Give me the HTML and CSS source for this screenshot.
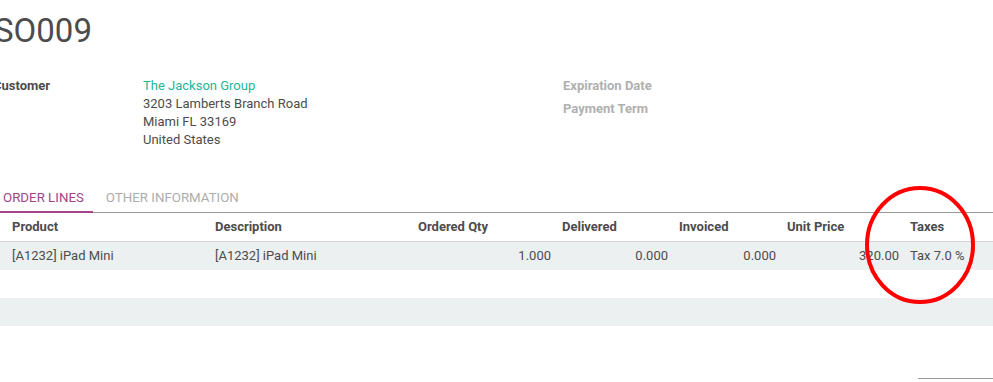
FILE: index.html
```html
<!DOCTYPE html>
<html>
<head>
	<title>SO009</title>
	<meta charset="UTF-8">
	<link rel="stylesheet" href="styles.css">
</head>
<body>
	<div class="sheet">
		<div class="sheet_head">
			<h1 class="title">SO009</h1>
			<div class="info">
				<div class="info_left">
					<span class="label">Customer</span>
					<div class="address">
						<a class="link">The Jackson Group</a>
						<div>3203 Lamberts Branch Road</div>
						<div>Miami FL 33169</div>
						<div>United States</div>
					</div>
				</div>
				<div class="info_right">
					<span class="label muted">Expiration Date</span>
					<span class="label muted">Payment Term</span>
				</div>
			</div>
		</div>

		<div class="tabs">
			<span class="tab active">ORDER LINES</span>
			<span class="tab">OTHER INFORMATION</span>
		</div>

		<div class="lines">
			<div class="row head">
				<div class="cell first">Product</div>
				<div class="cell">Description</div>
				<div class="cell">Ordered Qty</div>
				<div class="cell">Delivered</div>
				<div class="cell">Invoiced</div>
				<div class="cell">Unit Price</div>
				<div class="cell">Taxes</div>
			</div>
			<div class="row grey">
				<div class="cell first">[A1232] iPad Mini</div>
				<div class="cell">[A1232] iPad Mini</div>
				<div class="cell num">1.000</div>
				<div class="cell num">0.000</div>
				<div class="cell num">0.000</div>
				<div class="cell num">320.00</div>
				<div class="cell">Tax 7.0 %</div>
			</div>
			<div class="row"></div>
			<div class="row grey"></div>
		</div>

		<div class="total_line"></div>
	</div>

	<svg class="mark" width="120" height="128" viewBox="0 0 120 128">
		<ellipse cx="58" cy="62" rx="53" ry="57" fill="none" stroke="#ff0000" stroke-width="4"/>
	</svg>
</body>
</html>
```

FILE: styles.css
```css
*{
	margin: 0px;
	padding: 0px;
	box-sizing: border-box;
}
body{
	font-family: Roboto, "Liberation Sans", sans-serif;
	font-size: 13px;
	color: #4c4c4c;
	background-color: #ffffff;
	overflow: hidden;
}
.sheet{
	width: 993px;
	padding-top: 11px;
}
.sheet_head{
	margin-left: -7px;
}
.title{
	font-size: 33px;
	font-weight: normal;
	line-height: 40px;
	color: #4c4c4c;
	margin-left: 1px;
}
.info{
	display: grid;
	grid-template-columns: 570px 1fr;
	margin-top: 26px;
}
.info_left{
	display: grid;
	grid-template-columns: 150px 1fr;
	line-height: 18px;
}
.info_right{
	display: flex;
	flex-direction: column;
	line-height: 23px;
	margin-top: -3px;
}
.label{
	font-weight: bold;
	color: #4c4c4c;
}
.muted{
	color: #b0b0b0;
}
.link{
	color: #21b799;
	text-decoration: none;
}
.tabs{
	display: flex;
	margin-top: 30px;
	border-bottom: 1px solid #9a9a9a;
	height: 34px;
}
.tab{
	padding: 10px 13px 0px 13px;
	line-height: 18px;
	font-size: 13.3px;
	color: #adadad;
}
.tab.active{
	padding-left: 3px;
	padding-right: 9px;
	color: #a24689;
	border-bottom: 2px solid #a24689;
	margin-bottom: -1px;
}
.lines{
	width: 993px;
}
.row{
	display: grid;
	grid-template-columns: 207px 203px 144px 117px 108px 123px 91px;
	height: 28px;
	line-height: 28px;
}
.row.head{
	font-weight: bold;
	border-bottom: 1px solid #d6d6d6;
	height: 29px;
}
.row.grey{
	background-color: #edf0f1;
}
.cell{
	padding-left: 8px;
	padding-right: 3px;
	white-space: nowrap;
	overflow: hidden;
}
.cell.first{
	padding-left: 12px;
}
.cell.num{
	text-align: right;
}
.total_line{
	width: 75px;
	height: 1px;
	background-color: #9a9a9a;
	margin-left: 918px;
	margin-top: 52px;
}
.mark{
	position: absolute;
	left: 862px;
	top: 183px;
}
```
